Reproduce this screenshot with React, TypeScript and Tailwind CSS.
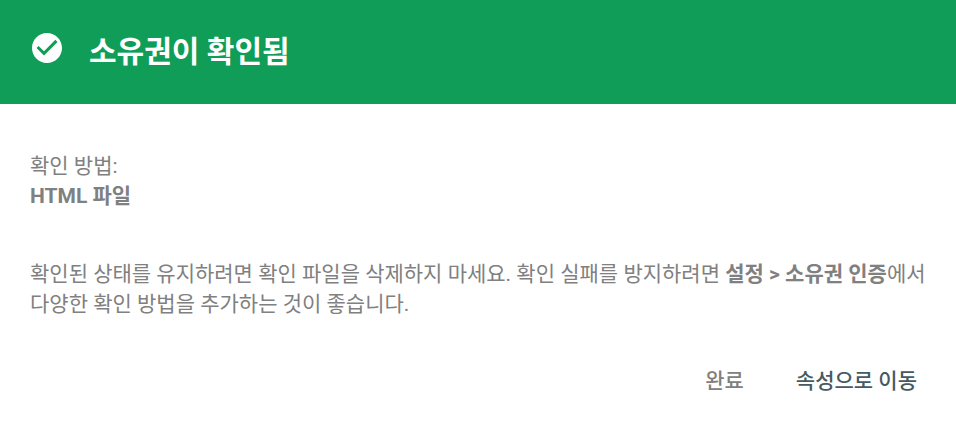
import React from 'react';

const CJK = "font-['Roboto','Noto_Sans_CJK_KR',sans-serif]";

const App: React.FC = () => {
  return (
    <div className={`w-[956px] h-[421px] bg-white overflow-hidden ${CJK}`}>
      {/* 헤더 */}
      <div className="h-[104px] bg-[#0f9d58] flex items-center pl-[29px]">
        <svg width="36" height="36" viewBox="0 0 24 24" className="mb-[8px]">
          <path
            fill="#ffffff"
            d="M12 2C6.48 2 2 6.48 2 12s4.48 10 10 10 10-4.48 10-10S17.52 2 12 2zm-2 15l-5-5 1.41-1.41L10 14.17l7.59-7.59L19 8l-9 9z"
          />
        </svg>
        <span className="ml-[24px] text-[30px] leading-[40px] font-bold text-white">소유권이 확인됨</span>
      </div>

      {/* 본문 */}
      <div className="px-[30px] pt-[47px] text-[21px] leading-[30px] text-[#808080]">
        <div>확인 방법:</div>
        <div className="font-bold">HTML 파일</div>
        <p className="mt-[48px] w-[900px]">
          확인된 상태를 유지하려면 확인 파일을 삭제하지 마세요. 확인 실패를 방지하려면{' '}
          <b>설정 &gt; 소유권 인증</b>에서 다양한 확인 방법을 추가하는 것이 좋습니다.
        </p>
      </div>

      {/* 버튼 */}
      <div className="flex justify-end items-center pr-[39px] mt-[47px] text-[21px] leading-[30px] font-medium">
        <span className="text-[#808080]">완료</span>
        <span className="ml-[52px] text-[#455a64]">속성으로 이동</span>
      </div>
    </div>
  );
};

export default App;
